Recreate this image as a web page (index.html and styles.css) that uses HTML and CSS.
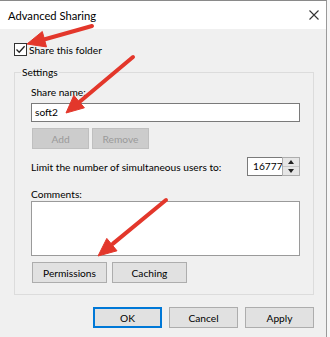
FILE: index.html
```html
<!DOCTYPE html>
<html lang="en">
<head>
    <meta charset="UTF-8">
    <title>Advanced Sharing</title>
    <link rel="stylesheet" href="styles.css">
</head>
<body>
<div class="window">
    <div class="titlebar">
        <span class="title">Advanced Sharing</span>
        <svg class="close" width="10" height="10" viewBox="0 0 10 10">
            <path d="M0.5 0.5 L9.5 9.5 M9.5 0.5 L0.5 9.5" stroke="#333" stroke-width="1.1" fill="none"/>
        </svg>
    </div>

    <div class="content">
        <label class="share-check">
            <span class="checkbox">
                <svg width="11" height="11" viewBox="0 0 11 11">
                    <path d="M1.5 5.5 L4.2 8.3 L9.6 2.2" stroke="#222" stroke-width="1.3" fill="none"/>
                </svg>
            </span>
            Share this folder
        </label>

        <fieldset class="group">
            <legend>Settings</legend>
            <div class="group-body">
                <div class="field-label">Share name:</div>
                <div class="textbox">soft2</div>
                <div class="btn-row">
                    <button class="btn small" disabled>Add</button>
                    <button class="btn small" disabled>Remove</button>
                </div>

                <div class="limit-row">
                    <span>Limit the number of simultaneous users to:</span>
                    <div class="spinner">
                        <span class="spin-value">16777</span>
                        <span class="spin-buttons">
                            <span class="spin-up"></span>
                            <span class="spin-down"></span>
                        </span>
                    </div>
                </div>

                <div class="field-label comments">Comments:</div>
                <div class="textarea"></div>
                <div class="btn-row wide-row">
                    <button class="btn wide">Permissions</button>
                    <button class="btn wide">Caching</button>
                </div>
            </div>
        </fieldset>

        <div class="dialog-buttons">
            <button class="btn dlg default">OK</button>
            <button class="btn dlg">Cancel</button>
            <button class="btn dlg">Apply</button>
        </div>
    </div>

    <!-- red annotation arrows over the dialog -->
    <svg class="arrows" width="330" height="337" viewBox="0 0 330 337">
        <g fill="#e3372b" stroke="#e3372b">
            <line x1="92" y1="26" x2="44" y2="39.5" stroke-width="4" stroke-linecap="round"/>
            <polygon points="27,44 46.5,46.9 42.3,31.5" stroke-width="1"/>

            <line x1="133" y1="57" x2="80" y2="101.5" stroke-width="4" stroke-linecap="round"/>
            <polygon points="66,113 84.4,107.8 73.8,95.4" stroke-width="1"/>

            <line x1="166" y1="200" x2="113" y2="243.6" stroke-width="4" stroke-linecap="round"/>
            <polygon points="98,256 117,250.8 106.8,238.4" stroke-width="1"/>
        </g>
    </svg>
</div>
</body>
</html>
```

FILE: styles.css
```css
body {
    margin: 0;
    background: #f7f7f7;
    font-family: Lato, "Liberation Sans", sans-serif;
    font-size: 10.2px;
    color: #000;
}

.window {
    position: relative;
    width: 326px;
    height: 336px;
    border-top: 1px solid #8a8a8a;
    border-right: 1px solid #9a9a9a;
    background: #f0f0f0;
}

.titlebar {
    height: 28px;
    background: #fff;
    display: flex;
    align-items: center;
    justify-content: space-between;
    padding: 0 7px 0 8px;
}

.title {
    font-size: 11.2px;
}

.content {
    padding: 13px 12px 0 14px;
}

.share-check {
    display: flex;
    align-items: center;
    gap: 2px;
    height: 15px;
}

.checkbox {
    width: 13px;
    height: 13px;
    box-sizing: border-box;
    border: 1px solid #333;
    background: #fff;
    display: flex;
    align-items: center;
    justify-content: center;
}

.group {
    margin: 7px 0 0;
    padding: 0;
    border: 1px solid #dcdcdc;
    min-width: 0;
}

.group legend {
    margin-left: 6px;
    padding: 0 1px;
    line-height: 16px;
}

.group-body {
    padding: 5px 13px 11px 16px;
}

.field-label {
    line-height: 14px;
}

.textbox {
    margin-top: 4px;
    height: 19px;
    box-sizing: border-box;
    border: 1px solid #7a7a7a;
    background: #fff;
    padding: 0 3px;
    line-height: 17px;
}

.btn {
    font-family: inherit;
    font-size: 10.2px;
    color: #000;
    background: #e1e1e1;
    border: 1px solid #adadad;
    padding: 0;
    height: 21px;
    box-sizing: border-box;
}

.btn:disabled {
    background: #cccccc;
    border-color: #bfbfbf;
    color: #9a9a9a;
}

.btn-row {
    display: flex;
    gap: 3px;
    margin-top: 6px;
    padding-left: 1px;
}

.small {
    width: 57px;
}

.limit-row {
    margin-top: 8px;
    height: 19px;
    display: flex;
    align-items: center;
    justify-content: space-between;
    white-space: nowrap;
}

.spinner {
    display: flex;
    height: 19px;
    width: 53px;
}

.spin-value {
    width: 35px;
    box-sizing: border-box;
    border: 1px solid #7a7a7a;
    border-right: none;
    background: #fff;
    padding-left: 5px;
    line-height: 17px;
    overflow: hidden;
    white-space: nowrap;
}

.spin-buttons {
    width: 18px;
    box-sizing: border-box;
    border: 1px solid #adadad;
    background: #e6e6e6;
    display: flex;
    flex-direction: column;
}

.spin-up,
.spin-down {
    flex: 1;
    display: flex;
    align-items: center;
    justify-content: center;
}

.spin-up {
    border-bottom: 1px solid #c8c8c8;
}

.spin-up::before {
    content: "";
    border-left: 3px solid transparent;
    border-right: 3px solid transparent;
    border-bottom: 4px solid #222;
}

.spin-down::before {
    content: "";
    border-left: 3px solid transparent;
    border-right: 3px solid transparent;
    border-top: 4px solid #222;
}

.comments {
    margin-top: 12px;
    line-height: 13px;
}

.textarea {
    height: 55px;
    box-sizing: border-box;
    border: 1px solid #9a9a9a;
    background: #fff;
}

.wide-row {
    gap: 5px;
    margin-top: 6px;
}

.wide {
    width: 75px;
}

.dialog-buttons {
    margin-top: 12px;
    display: flex;
    justify-content: flex-end;
    gap: 7px;
}

.dlg {
    width: 69px;
}

.dlg.default {
    border-color: #0078d7;
    box-shadow: inset 0 0 0 1px #0078d7;
}

.arrows {
    position: absolute;
    top: -1px;
    left: 0;
    pointer-events: none;
}
```
